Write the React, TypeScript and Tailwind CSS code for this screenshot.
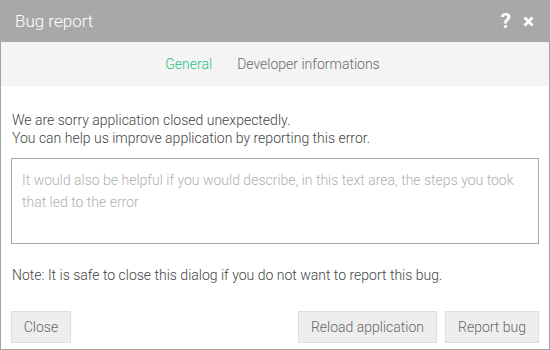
import React from "react";

export default function App() {
  return (
    <div
      className="w-[550px] h-[350px] flex flex-col bg-white overflow-hidden"
      style={{ fontFamily: "Roboto, 'Liberation Sans', sans-serif" }}
    >
      <div className="h-[42px] shrink-0 bg-[#a8a8a8] flex items-center pl-[15px] pr-[16px]">
        <div className="text-[17px] font-light text-white leading-none">Bug report</div>
        <div className="ml-auto flex items-center gap-[12px]">
          <span className="text-[21px] font-bold text-white leading-none">?</span>
          <svg width="11" height="11" viewBox="0 0 11 11">
            <path d="M1.5 1.5 L9.5 9.5 M9.5 1.5 L1.5 9.5" stroke="white" strokeWidth="2.8" strokeLinecap="butt" />
          </svg>
        </div>
      </div>
      <div className="flex-1 flex flex-col border-x border-b border-[#a3a3a3]">
        <div className="h-[44px] shrink-0 bg-[#f4f4f4] flex items-center justify-center gap-[25px] text-[14px] font-light pr-[5px]">
          <span className="text-[#1ec27f]">General</span>
          <span className="text-[#6a6a6a]">Developer informations</span>
        </div>
        <div className="flex-1 flex flex-col px-[10px] pt-[25px]">
          <p className="text-[14px] leading-[18px] font-light text-[#444] pl-[1px]">
            We are sorry application closed unexpectedly.
            <br />
            You can help us improve application by reporting this error.
          </p>
          <textarea
            className="mt-[11px] h-[86px] w-full resize-none border border-[#a8a8a8] px-[10px] py-[10px] text-[14px] leading-[22px] font-light text-[#444] placeholder:text-[#b0b0b0] outline-none"
            placeholder="It would also be helpful if you would describe, in this text area, the steps you took that led to the error"
          />
          <p className="mt-[22px] text-[14px] leading-[18px] font-light text-[#444] pl-[1px]">
            Note: It is safe to close this dialog if you do not want to report this bug.
          </p>
          <div className="mt-[27px] flex items-center">
            <button className="h-[32px] w-[60px] bg-[#eeeeee] border border-[#dedede] text-[14px] font-light text-[#666]">
              Close
            </button>
            <button className="ml-auto h-[32px] w-[139px] bg-[#eeeeee] border border-[#dedede] text-[14px] font-light text-[#666]">
              Reload application
            </button>
            <button className="ml-[8px] h-[32px] w-[94px] bg-[#eeeeee] border border-[#dedede] text-[14px] font-light text-[#666]">
              Report bug
            </button>
          </div>
        </div>
      </div>
    </div>
  );
}
